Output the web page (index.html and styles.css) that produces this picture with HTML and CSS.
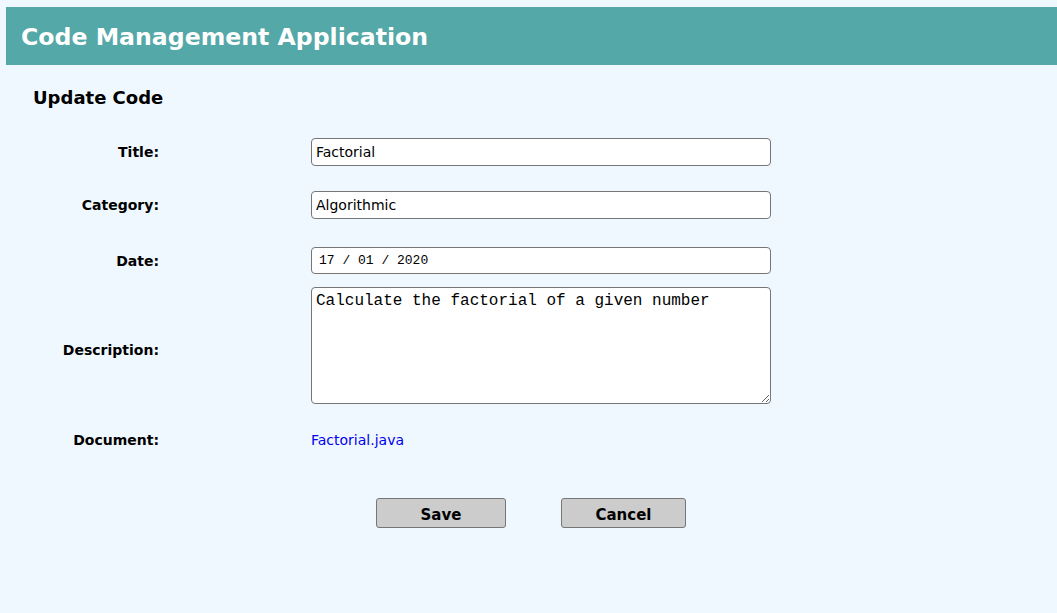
FILE: index.html
```html
<!DOCTYPE html>
<html>
<head>
<meta charset="utf-8">
<link rel="stylesheet" href="styles.css">
</head>
<body>
<header class="app-header">
  <h1 class="app-title">Code Management Application</h1>
</header>
<main class="content">
  <h2 class="page-title">Update Code</h2>
  <form class="code-form">
    <div class="form-row row-title">
      <label class="field-label">Title:</label>
      <input class="text-input" type="text" value="Factorial">
    </div>
    <div class="form-row row-category">
      <label class="field-label">Category:</label>
      <input class="text-input" type="text" value="Algorithmic">
    </div>
    <div class="form-row row-date">
      <label class="field-label">Date:</label>
      <div class="text-input date-input">17 / 01 / 2020</div>
    </div>
    <div class="form-row row-desc">
      <label class="field-label label-desc">Description:</label>
      <textarea class="text-area">Calculate the factorial of a given number</textarea>
    </div>
    <div class="form-row row-doc">
      <label class="field-label">Document:</label>
      <a class="doc-link" href="#">Factorial.java</a>
    </div>
    <div class="button-row">
      <button type="button" class="btn btn-save">Save</button>
      <button type="button" class="btn btn-cancel">Cancel</button>
    </div>
  </form>
</main>
</body>
</html>
```
FILE: styles.css
```css
html, body {
  margin: 0;
  padding: 0;
  background: #f0f8ff;
}
body {
  padding: 7px 0 0 6px;
  font-family: "DejaVu Sans", Verdana, sans-serif;
  color: #000;
  overflow: hidden;
}
.app-header {
  background: #54a8a7;
  height: 58px;
  display: flex;
  align-items: center;
  padding-left: 15px;
}
.app-title {
  margin: 0;
  color: #fff;
  font-size: 23.6px;
  font-weight: bold;
  position: relative;
  top: 1px;
}
.content {
  padding: 0;
}
.page-title {
  margin: 22px 0 0 27px;
  font-size: 18px;
  font-weight: bold;
  line-height: 22px;
}
.code-form {
  display: flex;
  flex-direction: column;
  margin-top: 29px;
}
.form-row {
  display: flex;
  align-items: center;
}
.field-label {
  width: 153px;
  text-align: right;
  font-size: 14px;
  font-weight: bold;
  margin-right: 152px;
}
.label-desc {
  padding-top: 9px;
}
.text-input {
  box-sizing: border-box;
  width: 460px;
  height: 28px;
  border: 1px solid #767676;
  border-radius: 4px;
  background: #fff;
  font-family: "DejaVu Sans", Verdana, sans-serif;
  font-size: 14px;
  padding: 0 4px;
  margin: 0;
  color: #000;
}
.date-input {
  height: 27px;
  display: flex;
  align-items: center;
  padding-left: 7px;
  font-family: "Liberation Mono", monospace;
  font-size: 13px;
}
.text-area {
  box-sizing: border-box;
  width: 460px;
  height: 117px;
  border: 1px solid #767676;
  border-radius: 4px;
  background: #fff;
  font-family: "Liberation Mono", monospace;
  font-size: 16px;
  padding: 4px 4px;
  margin: 0;
  resize: both;
}
.row-category { margin-top: 25px; }
.row-date { margin-top: 28px; }
.row-desc { margin-top: 13px; }
.row-doc { margin-top: 27px; height: 18px; }
.doc-link {
  color: #0000ee;
  text-decoration: none;
  font-size: 14px;
}
.button-row {
  display: flex;
  gap: 55px;
  margin: 49px 0 0 370px;
}
.btn {
  box-sizing: border-box;
  height: 30px;
  border: 1px solid #767676;
  border-radius: 3px;
  background: #cccccc;
  font-family: "DejaVu Sans", Verdana, sans-serif;
  font-size: 15px;
  font-weight: bold;
  color: #000;
  padding: 3px 0 0;
}
.btn-save { width: 130px; }
.btn-cancel { width: 125px; }
```
